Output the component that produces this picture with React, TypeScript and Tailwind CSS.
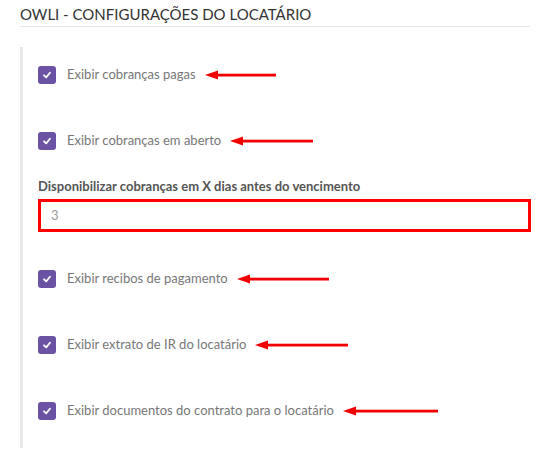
const items = [
  { label: "Exibir cobranças pagas", arrow: 71 },
  { label: "Exibir cobranças em aberto", arrow: 83 },
];

const items2 = [
  { label: "Exibir recibos de pagamento", arrow: 92 },
  { label: "Exibir extrato de IR do locatário", arrow: 93 },
  { label: "Exibir documentos do contrato para o locatário", arrow: 95 },
];

function Arrow({ w }: { w: number }) {
  return (
    <svg width={w} height="10" viewBox={`0 0 ${w} 10`} className="ml-[9px] shrink-0">
      <polygon points="0,5 13,0.5 13,9.5" fill="#f20000" />
      <rect x="11" y="3.7" width={w - 11} height="2.8" fill="#f20000" />
    </svg>
  );
}

function CheckRow({ label, arrow }: { label: string; arrow: number }) {
  return (
    <label className="flex items-center h-[20px]">
      <span className="w-[18px] h-[18px] rounded-[3px] bg-[#6b52a2] flex items-center justify-center shrink-0">
        <svg width="10" height="10" viewBox="0 0 10 10">
          <path d="M2 5.3 L4.2 7.4 L8 2.8" stroke="#fff" strokeWidth="1.8" fill="none" strokeLinecap="round" strokeLinejoin="round" />
        </svg>
      </span>
      <span className="ml-[11px] text-[13px] text-[#777]">{label}</span>
      <Arrow w={arrow} />
    </label>
  );
}

export default function App() {
  return (
    <div className="w-[556px] h-[464px] bg-white px-[20px] font-['Lato','Liberation_Sans',sans-serif]">
      <div className="w-[510px] border-b border-[#e5e5e5] pt-[5px] pb-[3px] text-[15px] leading-[18px] text-[#333]">
        OWLI - CONFIGURAÇÕES DO LOCATÁRIO
      </div>
      <div className="mt-[20px] border-l-[3px] border-[#e8e8e8] pl-[15px] pt-[18px] pb-[27px]">
        <div className="flex flex-col gap-[46px]">
          {items.map((it) => (
            <CheckRow key={it.label} {...it} />
          ))}
        </div>
        <div className="mt-[27px] text-[13px] leading-[16px] font-bold text-[#555]">
          Disponibilizar cobranças em X dias antes do vencimento
        </div>
        <div className="mt-[5px] w-[493px] h-[33px] border-[3px] border-[#ff0000] flex items-center pl-[10px] text-[13px] text-[#999]">
          3
        </div>
        <div className="mt-[37px] flex flex-col gap-[46px]">
          {items2.map((it) => (
            <CheckRow key={it.label} {...it} />
          ))}
        </div>
      </div>
    </div>
  );
}
